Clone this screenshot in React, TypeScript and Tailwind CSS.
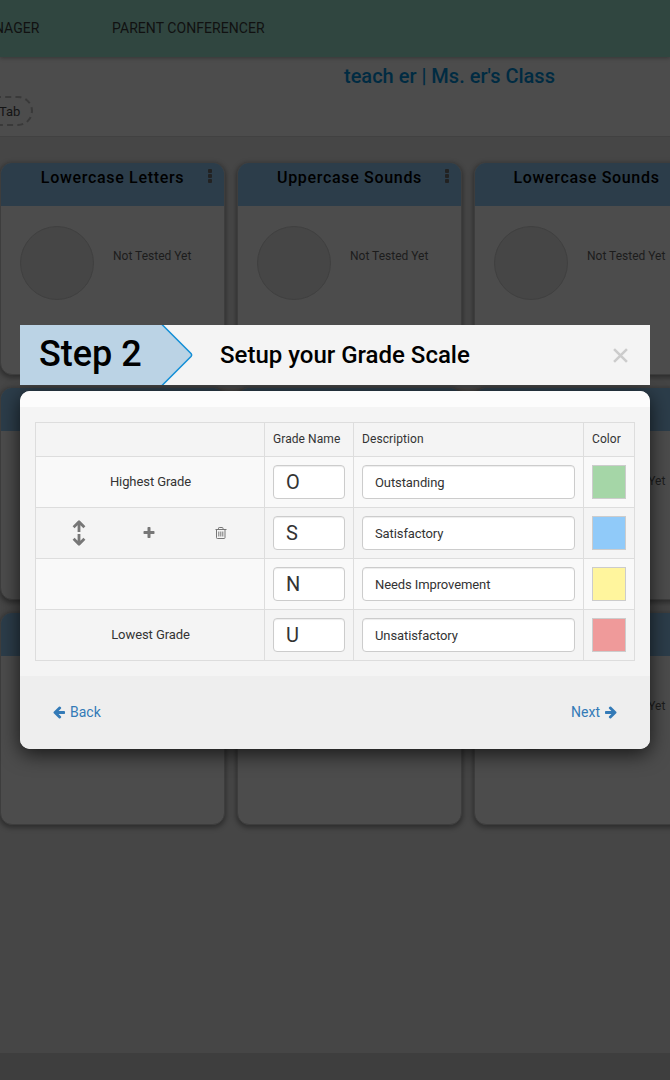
import React from "react";

const ROBOTO = "font-['Roboto',sans-serif]";

function ArrowLeft({ flip = false }: { flip?: boolean }) {
  return (
    <svg viewBox="0 0 1792 1792" className={flip ? "-mt-px size-[14px] -scale-x-100" : "-mt-px size-[14px]"} fill="#337ab7">
      <path d="M1664 896v128q0 53-32.5 90.5t-84.5 37.5h-704l293 294q38 36 38 90t-38 90l-75 76q-37 37-90 37-52 0-91-37l-651-652q-37-37-37-90 0-52 37-91l651-650q38-38 91-38 52 0 90 38l75 74q38 38 38 91t-38 91l-293 293h704q52 0 84.5 37.5t32.5 90.5z" />
    </svg>
  );
}

function MoveIcon() {
  return (
    <svg viewBox="0 0 14 28" className="-ml-px h-7 w-[14px]" fill="none" stroke="#777" strokeWidth="2.8">
      <path d="M7 13V3.6M1.6 8.2 7 2.8l5.4 5.4" strokeLinejoin="round" />
      <path d="M7 15v9.4M1.6 19.8 7 25.2l5.4-5.4" strokeLinejoin="round" />
    </svg>
  );
}

function PlusIcon() {
  return (
    <svg viewBox="0 0 1792 1792" className="-ml-px size-[14px]" fill="#777">
      <path d="M1600 736v192q0 40-28 68t-68 28h-416v416q0 40-28 68t-68 28h-192q-40 0-68-28t-28-68v-416h-416q-40 0-68-28t-28-68v-192q0-40 28-68t68-28h416v-416q0-40 28-68t68-28h192q40 0 68 28t28 68v416h416q40 0 68 28t28 68z" />
    </svg>
  );
}

function TrashIcon() {
  return (
    <svg viewBox="0 0 12 12" className="ml-px size-3" fill="none" stroke="#777" strokeWidth="1">
      <path d="M0.5 2.5h11M3.5 2.5V1.2q0-.7.7-.7h3.1q.7 0 .7.700v1.300M1.500 2.500v8.200q0 .8.8.8h6.900q.8 0 .8-.8V2.500M3.800 4.500v5M5.800 4.500v5M7.800 4.500v5" />
    </svg>
  );
}

function Dots() {
  return (
    <svg viewBox="0 0 4 14" className="absolute right-[12px] top-[6px] h-[14px] w-1" fill="#222">
      <rect width="4" height="4" rx="1" />
      <rect y="5" width="4" height="4" rx="1" />
      <rect y="10" width="4" height="4" rx="1" />
    </svg>
  );
}

function Card({ title }: { title?: string }) {
  return (
    <div className="h-[213px] w-[225px] shrink-0 overflow-hidden rounded-xl border border-[#3d3d3d] bg-[#4c4c4c] shadow-[0_2px_5px_1px_rgba(0,0,0,0.35)]">
      <div className="relative h-[43px] bg-[#2c3d4a] pt-[5px] text-center text-[16px] font-medium leading-[20px] tracking-[0.68px] text-black">
        {title}
        <Dots />
      </div>
      <div className="flex pl-[19px] pt-[20px]">
        <div className="size-[74px] rounded-full border border-[#404040] bg-[#464646]" />
        <div className="ml-[19px] mt-[21px] whitespace-nowrap text-[12px] leading-[18px] text-[#1c1c1c]">
          Not Tested Yet
        </div>
      </div>
    </div>
  );
}

const cardRows = [
  ["Lowercase Letters", "Uppercase Sounds", "Lowercase Sounds"],
  ["", "", ""],
  ["", "", ""],
];

const grades = [
  { label: "Highest Grade", name: "O", description: "Outstanding", swatch: "bg-[#a5d6a7]", row: "bg-[#f9f9f9]" },
  { label: "", name: "S", description: "Satisfactory", swatch: "bg-[#90caf9]", row: "bg-[#f4f4f4]", tools: true },
  { label: "", name: "N", description: "Needs Improvement", swatch: "bg-[#fff59d]", row: "bg-[#f9f9f9]" },
  { label: "Lowest Grade", name: "U", description: "Unsatisfactory", swatch: "bg-[#ef9a9a]", row: "bg-[#f4f4f4]" },
];

const CELL = "border-l border-t border-[#ddd]";
const INPUT =
  "h-[34px] w-full rounded border border-[#ccc] bg-white px-3 text-[#333] shadow-[inset_0_1px_1px_rgba(0,0,0,0.075)] outline-none";

function Dashboard() {
  return (
    <>
      <nav className="relative flex h-[57px] items-center bg-[#304640] text-[14px] text-[#111] shadow-[0_1px_4px_rgba(0,0,0,0.3)]">
        <span className="-ml-[6px] w-[118px]">NAGER</span>
        <span className="tracking-[0.06px]">PARENT CONFERENCER</span>
      </nav>
      <header className="h-20 border-b border-[#414141] bg-[#4c4c4c]">
        <div className="pl-[344px] pt-[7px] text-[20px] font-medium leading-6 text-[#002b42]">
          teach er | Ms. er's Class
        </div>
        <div className="-ml-5 mt-2 h-[30px] w-[53px] rounded-[15px] border-2 border-dashed border-[#393939] pl-[17px] text-[13px] leading-[27px] text-[#141414]">
          Tab
        </div>
      </header>
      <main className="flex h-[916px] flex-col gap-3 pt-[25px]">
        {cardRows.map((row, i) => (
          <div key={i} className="flex gap-3">
            {row.map((title, j) => (
              <Card key={j} title={title} />
            ))}
          </div>
        ))}
      </main>
      <footer className="h-[27px] bg-[#3e3e3e]" />
    </>
  );
}

function GradeTable() {
  return (
    <div className="border-b border-r border-[#ddd] text-[#333]">
      <div className="grid h-[34px] grid-cols-[229px_89px_230px_51px] text-[12px] leading-[33px] tracking-[0.08px]">
        <div className={CELL} />
        <div className={`${CELL} pl-2`}>Grade Name</div>
        <div className={`${CELL} pl-2`}>Description</div>
        <div className={`${CELL} pl-2`}>Color</div>
      </div>
      {grades.map((g) => (
        <div key={g.name} className={`grid h-[51px] grid-cols-[229px_89px_230px_51px] ${g.row}`}>
          <div className={`${CELL} flex items-center justify-center text-[13px] tracking-[-0.08px]`}>
            {g.tools ? (
              <div className="grid w-[211px] grid-cols-3 place-items-center">
                <MoveIcon />
                <PlusIcon />
                <TrashIcon />
              </div>
            ) : (
              <span className="pl-px">{g.label}</span>
            )}
          </div>
          <div className={`${CELL} p-2`}>
            <input className={`${INPUT} text-[20px]`} defaultValue={g.name} />
          </div>
          <div className={`${CELL} p-2`}>
            <input className={`${INPUT} text-[13px] tracking-[-0.1px]`} defaultValue={g.description} />
          </div>
          <div className={`${CELL} p-2`}>
            <div className={`size-[34px] border border-[#ccc] ${g.swatch}`} />
          </div>
        </div>
      ))}
    </div>
  );
}

function Modal() {
  return (
    <div className="absolute left-5 top-[325px] w-[630px]">
      <div className="relative z-10 flex h-[60px] items-center bg-[#f4f4f4] text-black">
        <div className="relative h-[60px] w-[173px]">
          <svg viewBox="0 0 173 60" className="absolute inset-0 h-[60px] w-[173px]">
            <path d="M0 0H142.5L171 28.5Q172.200 30 171 31.500L142.500 60H0Z" fill="#bbd3e5" />
            <path d="M142 -0.500L171 28.500Q172.200 30 171 31.500L142 60.500" fill="none" stroke="#118ed6" strokeWidth="1.500" />
          </svg>
          <span className="relative block pl-[19px] text-[36px] font-medium leading-[59px]">Step 2</span>
        </div>
        <h2 className="ml-[27px] text-[24px] font-medium">Setup your Grade Scale</h2>
        <svg viewBox="0 0 14 14" className="ml-auto mr-[22px] size-[15px]" stroke="#ccc" strokeWidth="2.400">
          <path d="M1 1 13 13M13 1 1 13" />
        </svg>
      </div>
      <div className="mt-[6px] h-[358px] overflow-hidden rounded-[10px] bg-[#f4f4f4] shadow-[0_5px_20px_rgba(0,0,0,0.7)]">
        <div className="h-4 bg-[#fcfcfc]" />
        <div className="h-[269px] p-[15px]">
          <GradeTable />
        </div>
        <div className="flex h-[73px] items-center justify-between bg-[#eee] px-8 text-[14px] text-[#337ab7]">
          <a className="flex items-center gap-1"><ArrowLeft />Back</a>
          <a className="flex items-center gap-1">Next<ArrowLeft flip /></a>
        </div>
      </div>
    </div>
  );
}

export default function App() {
  return (
    <div className={`relative h-[1080px] w-[670px] overflow-hidden bg-[#464646] ${ROBOTO}`}>
      <Dashboard />
      <Modal />
    </div>
  );
}
